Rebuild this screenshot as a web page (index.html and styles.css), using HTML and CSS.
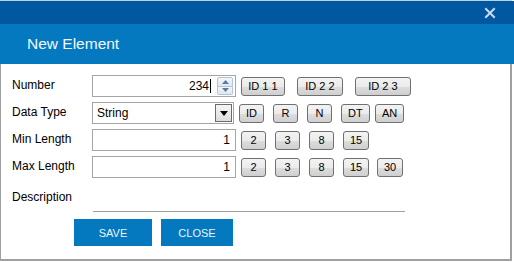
FILE: index.html
```html
<!DOCTYPE html>
<html>
<head>
<meta charset="utf-8">
<link rel="stylesheet" href="styles.css">
</head>
<body>
<div class="dialog">
  <div class="titlebar">
    <span class="close-x">
      <svg width="12" height="12" viewBox="0 0 12 12"><path d="M2 2 L10 10 M10 2 L2 10" stroke="#c6dcee" stroke-width="2" stroke-linecap="square"/></svg>
    </span>
  </div>
  <div class="header">New Element</div>
  <div class="content">
    <div class="row">
      <label class="lbl">Number</label>
      <div class="field spin-field">
        <span class="val">234<span class="caret"></span></span>
        <span class="spinner">
          <span class="spin up"><svg width="7" height="4" viewBox="0 0 7 4"><path d="M0 4 L3.5 0 L7 4Z" fill="#5c7aa8"/></svg></span>
          <span class="spin down"><svg width="7" height="4" viewBox="0 0 7 4"><path d="M0 0 L3.5 4 L7 0Z" fill="#5c7aa8"/></svg></span>
        </span>
      </div>
      <div class="btns btns-wide">
        <span class="btn w42">ID 1 1</span>
        <span class="btn w46">ID 2 2</span>
        <span class="btn w56">ID 2 3</span>
      </div>
    </div>
    <div class="row">
      <label class="lbl">Data Type</label>
      <div class="field select-field">
        <span class="sel-text">String</span>
        <span class="drop"><svg width="8" height="5" viewBox="0 0 8 5"><path d="M0 0 L8 0 L4 5Z" fill="#000"/></svg></span>
      </div>
      <div class="btns">
        <span class="btn">ID</span>
        <span class="btn">R</span>
        <span class="btn">N</span>
        <span class="btn">DT</span>
        <span class="btn">AN</span>
      </div>
    </div>
    <div class="row">
      <label class="lbl">Min Length</label>
      <div class="field num-field"><span class="val">1</span></div>
      <div class="btns">
        <span class="btn">2</span>
        <span class="btn">3</span>
        <span class="btn">8</span>
        <span class="btn">15</span>
      </div>
    </div>
    <div class="row">
      <label class="lbl">Max Length</label>
      <div class="field num-field"><span class="val">1</span></div>
      <div class="btns">
        <span class="btn">2</span>
        <span class="btn">3</span>
        <span class="btn">8</span>
        <span class="btn">15</span>
        <span class="btn">30</span>
      </div>
    </div>
    <div class="desc-row">
      <label class="lbl">Description</label>
    </div>
    <div class="desc-line"></div>
    <div class="actions">
      <span class="action save">SAVE</span>
      <span class="action close">CLOSE</span>
    </div>
  </div>
</div>
</body>
</html>
```

FILE: styles.css
```css
* { box-sizing: border-box; }
html, body { margin: 0; padding: 0; background: #fff; }
body { font-family: "Liberation Sans", Arial, sans-serif; width: 514px; height: 262px; overflow: hidden; }

.dialog {
  width: 512px;
  height: 261px;
  border-top: 1px solid #b9d3e8;
  display: flex;
  flex-direction: column;
}
.titlebar {
  height: 23px;
  background: #0158a0;
  display: flex;
  justify-content: flex-end;
  align-items: center;
  padding-right: 18px;
  margin-right: -2px;
}
.close-x { display: flex; width: 12px; height: 12px; }
.header {
  height: 40px;
  background: #0479c0;
  color: #f4f8fc;
  font-size: 15.5px;
  padding-left: 27px;
  line-height: 40px;
  margin-right: -2px;
}
.content {
  flex: 1;
  border-left: 1px solid #a0a0a0;
  border-right: 2px solid #a0a0a0;
  border-bottom: 2px solid #a0a0a0;
  padding: 11px 0 0 10px;
  display: flex;
  flex-direction: column;
  gap: 5px;
}
.row {
  display: flex;
  align-items: center;
  height: 22px;
}
.lbl {
  width: 81px;
  font-size: 12px;
  color: #000;
  padding-left: 1px;
  padding-bottom: 2px;
}
.field {
  height: 22px;
  border: 1px solid #a5a5a5;
  background: #fff;
  display: flex;
  align-items: center;
  font-size: 12px;
}
.num-field { width: 144px; justify-content: flex-end; padding-right: 5px; }
.spin-field { width: 144px; justify-content: flex-end; padding-right: 2px; }
.spin-field .val { margin-right: 6px; display: flex; align-items: center; }
.caret { display: inline-block; width: 1px; height: 14px; background: #000; margin-left: 1px; }
.spinner { display: flex; flex-direction: column; width: 16px; height: 18px; }
.spin {
  flex: 1;
  display: flex; align-items: center; justify-content: center;
  border: 1px solid #b4c3d6;
  background: linear-gradient(#f4f7fb, #dfe7f1);
}
.spin.up { border-radius: 2px 2px 0 0; }
.spin.down { border-radius: 0 0 2px 2px; border-top: none; }
.select-field { width: 142px; justify-content: space-between; padding: 0 1px 0 4px; }
.drop {
  width: 17px; height: 18px;
  border: 1px solid #6b6b6b;
  background: linear-gradient(#f6f6f6, #dcdcdc);
  display: flex; align-items: center; justify-content: center;
}
.btns {
  display: grid;
  grid-template-columns: repeat(5, 34px);
  margin-left: 5px;
  align-items: center;
}
.btns-wide { display: flex; gap: 12px; margin-left: 5px; }
.btn {
  justify-self: start;
  height: 19px;
  min-width: 25px;
  padding: 0 6px;
  border: 1px solid #707070;
  border-radius: 3px;
  background: linear-gradient(#f3f3f3 0%, #ebebeb 50%, #dddddd 51%, #cfcfcf 100%);
  font-size: 11px;
  color: #000;
  display: flex; align-items: center; justify-content: center;
}
.w42 { width: 44px; }
.w46 { width: 46px; }
.w56 { width: 56px; }
.desc-row { height: 14px; line-height: 14px; display: flex; align-items: center; margin-top: 7px; }
.desc-row .lbl { padding-bottom: 0; }
.desc-line {
  margin-left: 82px;
  width: 312px;
  height: 1px;
  background: #a0a0a0;
  margin-top: 2px;
}
.actions { display: flex; gap: 9px; margin-left: 63px; margin-top: 2px; }
.action {
  height: 27px;
  background: #0479c0;
  color: #eef4fa;
  font-size: 11px;
  display: flex; align-items: center; justify-content: center;
}
.save { width: 78px; }
.close { width: 72px; }
```
